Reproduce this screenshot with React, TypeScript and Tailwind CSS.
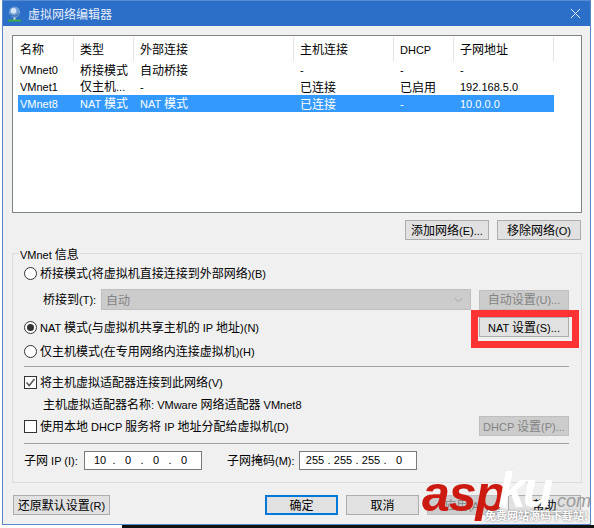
import React from "react";

const font = "[font-family:'Noto_Sans_CJK_SC',sans-serif]";

function T({ children }: { children: string }) {
  const runs = children.split(/([\x00-\x7f]+)/).filter((r) => r.length > 0);
  return (
    <>
      {runs.map((r, i) =>
        /^[\x00-\x7f]/.test(r) ? (
          <span key={i} className="[font-family:'Liberation_Sans',sans-serif] text-[11px] whitespace-pre">
            {r}
          </span>
        ) : (
          <span key={i}>{r}</span>
        )
      )}
    </>
  );
}

function Btn({ children, w, disabled, primary }: { children: string; w: string; disabled?: boolean; primary?: boolean }) {
  return (
    <div
      className={`${w} h-5 flex items-center justify-center shrink-0 text-xs leading-none whitespace-nowrap ${
        primary
          ? "border-2 border-[#0078d7] bg-[#e1e1e1] text-black"
          : disabled
          ? "border border-[#bfbfbf] bg-[#cccccc] text-[#838383]"
          : "border border-[#adadad] bg-[#e1e1e1] text-black"
      }`}
    >
      <span>
        <T>{children}</T>
      </span>
    </div>
  );
}

function Radio({ on }: { on?: boolean }) {
  return (
    <div className="w-[13px] h-[13px] rounded-full border border-[#333333] bg-white flex items-center justify-center shrink-0">
      {on && <div className="w-[7px] h-[7px] rounded-full bg-[#333333]" />}
    </div>
  );
}

function Check({ on }: { on?: boolean }) {
  return (
    <div className="w-[13px] h-[13px] border border-[#333333] bg-white shrink-0">
      {on && (
        <svg viewBox="0 0 11 11" className="w-[11px] h-[11px]">
          <path d="M1.5 5.5 L4.2 8.5 L9.5 2" fill="none" stroke="#555555" strokeWidth="1.5" />
        </svg>
      )}
    </div>
  );
}

function Row({ cells, selected }: { cells: string[]; selected?: boolean }) {
  const widths = ["w-[60px]", "w-[60px]", "w-[160px]", "w-[100px]", "w-[60px]", "w-[96px]"];
  return (
    <div className={`h-[17px] flex items-center text-xs leading-none whitespace-nowrap ${selected ? "bg-[#3399ff] text-white" : "text-black"}`}>
      {cells.map((c, i) => (
        <div key={i} className={`${widths[i]} pl-[2px]`}>
          <T>{c}</T>
        </div>
      ))}
    </div>
  );
}

function Head() {
  const cols: [string, string][] = [
    ["名称", "w-[56px] pl-[2px]"],
    ["类型", "w-[60px] pl-[6px]"],
    ["外部连接", "w-[160px] pl-[6px]"],
    ["主机连接", "w-[100px] pl-[6px]"],
    ["DHCP", "w-[60px] pl-[6px]"],
    ["子网地址", "w-[100px] pl-[6px]"],
  ];
  return (
    <div className="h-[24px] flex text-xs leading-none text-black whitespace-nowrap pl-[5px]">
      {cols.map(([t, w]) => (
        <div key={t} className={`${w} flex items-center border-r border-[#e5e5e5] h-[24px]`}>
          <span>
            <T>{t}</T>
          </span>
        </div>
      ))}
    </div>
  );
}

function IpBox({ parts }: { parts: string[] }) {
  return (
    <div className="w-[118px] h-[19px] border border-[#7a7a7a] bg-white flex items-center pl-[4px] leading-none text-black [font-family:'Liberation_Sans',sans-serif] text-[11px]">
      {parts.map((p, i) => (
        <React.Fragment key={i}>
          <span className="w-[22px] text-center">{p}</span>
          {i < 3 && <span className="w-[6px] text-center">.</span>}
        </React.Fragment>
      ))}
    </div>
  );
}

export default function App() {
  return (
    <div className={`relative w-[594px] h-[528px] overflow-hidden bg-white ${font}`}>
      <div className="ml-[2px] w-[589px] h-[525px] bg-[#f0f0f0] border border-[#5b87c4] border-t-0 flex flex-col">
        <div className="h-[26px] bg-[#2b6fc9] flex items-center pl-[4px] pr-[9px] shrink-0 border-t border-[#5a8ad0]">
          <svg viewBox="0 0 16 17" className="w-[15px] h-[16px] shrink-0">
            <circle cx="8" cy="6.5" r="6" fill="#6f9fd6" />
            <circle cx="7" cy="5" r="3" fill="#d5e6f6" />
            <path d="M3 9 Q8 13 13 8" stroke="#2f5f9f" strokeWidth="1" fill="none" />
            <rect x="7" y="12" width="2" height="3" fill="#d8d8d8" />
            <rect x="1" y="14.5" width="14" height="2" fill="#3fae3f" />
          </svg>
          <span className="ml-[6px] text-xs leading-none text-[#e8eef8]">虚拟网络编辑器</span>
          <svg viewBox="0 0 12 12" className="w-[11px] h-[11px] ml-auto">
            <path d="M1 1 L11 11 M11 1 L1 11" stroke="#ffffff" strokeWidth="1" fill="none" />
          </svg>
        </div>

        <div className="flex-1 flex flex-col pl-[9px] pt-[9px]">
          <div className="h-[178px] w-[570px] border border-[#7f8487] bg-white shrink-0 pt-[1px]">
            <Head />
            <div className="pl-[5px] pr-[27px]">
              <Row cells={["VMnet0", "桥接模式", "自动桥接", "-", "-", "-"]} />
              <Row cells={["VMnet1", "仅主机...", "-", "已连接", "已启用", "192.168.5.0"]} />
              <Row selected cells={["VMnet8", "NAT 模式", "NAT 模式", "已连接", "-", "10.0.0.0"]} />
            </div>
          </div>

          <div className="flex justify-end gap-2 mt-[7px] pr-[1px] w-[570px]">
            <Btn w="w-[84px]">添加网络(E)...</Btn>
            <Btn w="w-[84px]">移除网络(O)</Btn>
          </div>

          <div className="relative mt-[13px] w-[570px] h-[230px] border border-[#dcdcdc] pl-[11px] pr-[12px] pt-[12px] text-xs leading-none text-black">
            <div className="absolute left-[6px] -top-[7px] bg-[#f0f0f0] px-[1px] text-xs leading-none h-[14px] flex items-center">
              <span>
                <T>VMnet 信息</T>
              </span>
            </div>

            <div className="flex items-center gap-[3px] h-[15px]">
              <Radio />
              <span>
                <T>桥接模式(将虚拟机直接连接到外部网络)(B)</T>
              </span>
            </div>

            <div className="flex items-center mt-[8px] h-[21px]">
              <span className="w-[58px] ml-[19px] shrink-0 whitespace-nowrap">
                <T>桥接到(T):</T>
              </span>
              <div className="w-[370px] h-[21px] bg-[#cccccc] border border-[#bfbfbf] flex items-center justify-between pl-[4px] pr-[7px] text-[#838383] shrink-0">
                <span>自动</span>
                <svg viewBox="0 0 10 6" className="w-[9px] h-[6px]">
                  <path d="M1 1 L5 5 L9 1" stroke="#a0a0a0" strokeWidth="1" fill="none" />
                </svg>
              </div>
              <div className="ml-[8px]">
                <Btn w="w-[90px]" disabled>
                  自动设置(U)...
                </Btn>
              </div>
            </div>

            <div className="flex items-center justify-between mt-[7px] h-[20px]">
              <div className="flex items-center gap-[3px]">
                <Radio on />
                <span>
                  <T>NAT 模式(与虚拟机共享主机的 IP 地址)(N)</T>
                </span>
              </div>
              <Btn w="w-[90px]">NAT 设置(S)...</Btn>
            </div>

            <div className="flex items-center gap-[3px] mt-[7px] h-[15px]">
              <Radio />
              <span>
                <T>仅主机模式(在专用网络内连接虚拟机)(H)</T>
              </span>
            </div>

            <div className="h-px bg-[#a0a0a0] mt-[7px] w-[545px]" />

            <div className="flex items-center gap-[3px] mt-[8px] h-[15px]">
              <Check on />
              <span>
                <T>将主机虚拟适配器连接到此网络(V)</T>
              </span>
            </div>

            <div className="mt-[7px] ml-[19px] h-[14px] flex items-center whitespace-nowrap">
              <span>
                <T>主机虚拟适配器名称: VMware 网络适配器 VMnet8</T>
              </span>
            </div>

            <div className="flex items-center justify-between mt-[5px] h-[20px]">
              <div className="flex items-center gap-[3px]">
                <Check />
                <span>
                  <T>使用本地 DHCP 服务将 IP 地址分配给虚拟机(D)</T>
                </span>
              </div>
              <Btn w="w-[90px]" disabled>
                DHCP 设置(P)...
              </Btn>
            </div>

            <div className="h-px bg-[#a0a0a0] mt-[7px] w-[545px]" />

            <div className="flex items-center mt-[7px] h-[19px] whitespace-nowrap">
              <span className="w-[60px] shrink-0">
                <T>子网 IP (I):</T>
              </span>
              <IpBox parts={["10", "0", "0", "0"]} />
              <span className="w-[72px] shrink-0 ml-[25px]">
                <T>子网掩码(M):</T>
              </span>
              <IpBox parts={["255", "255", "255", "0"]} />
            </div>
          </div>

          <div className="flex items-center mt-[12px] w-[570px] pl-[1px]">
            <Btn w="w-[97px]">还原默认设置(R)</Btn>
            <div className="ml-[155px]">
              <Btn w="w-[73px]" primary>
                确定
              </Btn>
            </div>
            <div className="ml-[8px]">
              <Btn w="w-[73px]">取消</Btn>
            </div>
            <div className="ml-[8px]">
              <Btn w="w-[73px]" disabled>
                应用(A)
              </Btn>
            </div>
            <div className="ml-[8px]">
              <Btn w="w-[73px]">帮助</Btn>
            </div>
          </div>
        </div>
      </div>

      {/* highlight annotation */}
      <div className="absolute left-[471px] top-[310px] w-[108px] h-[38px] border-[7px] border-[#ff3333]" />

      {/* watermark */}
      <div className="absolute left-[422px] top-[462px] w-[172px] h-[66px] [font-family:'Liberation_Sans',sans-serif] pointer-events-none">
        <span className="absolute left-0 top-[7px] text-[50px] leading-none font-bold italic text-[#cc1a10] tracking-[-1px]">asp</span>
        <span className="absolute left-[76px] top-[3px] text-[50px] leading-none font-bold italic text-white tracking-[-3px]">ku</span>
        <span className="absolute left-[135px] top-[30px] text-[18px] leading-none italic text-[#9a9a9a]">com</span>
        <span className="absolute left-[63px] top-[48px] text-[11px] leading-none font-bold whitespace-nowrap text-white [font-family:'Noto_Sans_CJK_SC',sans-serif] [text-shadow:0_0_2px_#666666]">免费网站源码下载站!</span>
      </div>

      {/* desktop behind the dialog */}
      <div className="absolute left-[122px] top-[525px] w-[472px] h-[3px] bg-[#111111]" />
    </div>
  );
}
